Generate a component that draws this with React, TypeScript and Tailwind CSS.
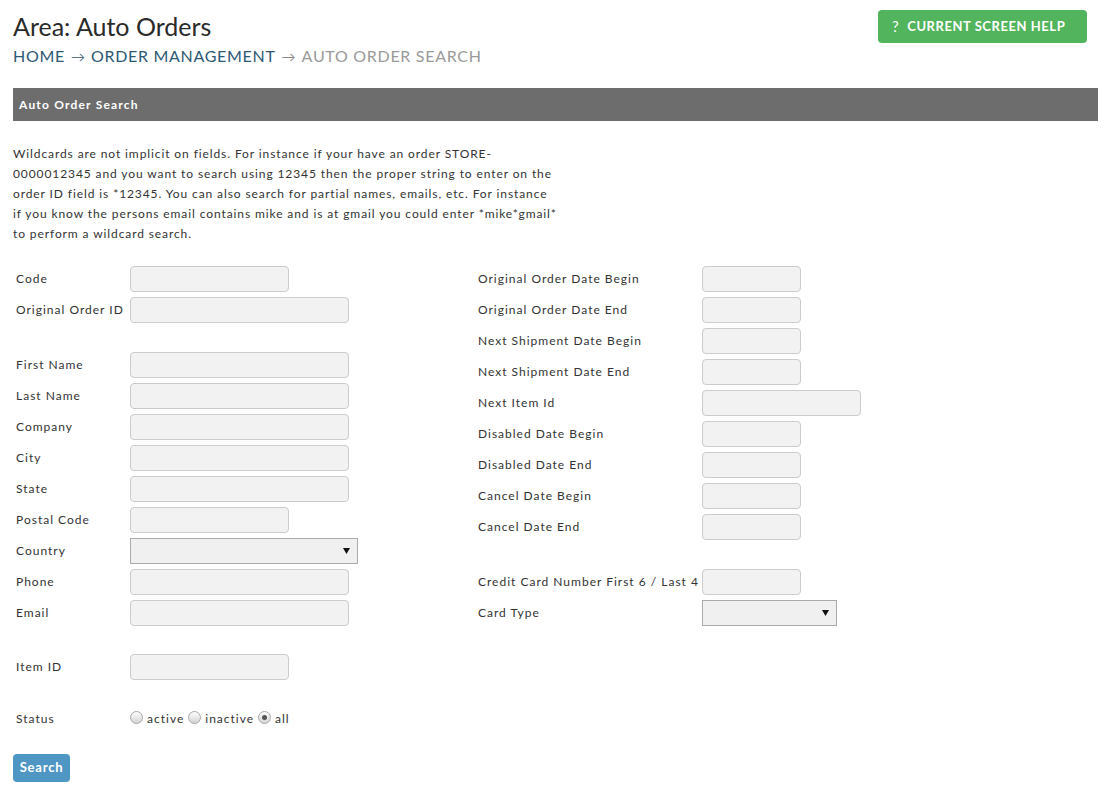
import React from "react";

const font = { fontFamily: "Lato, 'Open Sans', sans-serif" };

function Input({ w }: { w: string }) {
  return (
    <div className={`h-[26px] ${w} rounded-[4px] border border-[#cccccc] bg-[#f2f2f2]`} />
  );
}

function Select({ w }: { w: string }) {
  return (
    <div className={`h-[26px] ${w} border border-[#aaaaaa] bg-[#f0f0f0] flex items-center justify-end pr-[7px]`}>
      <svg width="7" height="6" viewBox="0 0 7 6">
        <path d="M0 0 H7 L3.5 6 Z" fill="#111" />
      </svg>
    </div>
  );
}

function Row({ label, children, lw }: { label: string; children: React.ReactNode; lw: string }) {
  return (
    <div className="flex items-center h-[26px]">
      <div className={`${lw} pl-[3px] shrink-0 text-[12px] tracking-[1px] text-[#333]`}>{label}</div>
      {children}
    </div>
  );
}

function Radio({ checked }: { checked?: boolean }) {
  return (
    <span className="inline-flex items-center justify-center w-[13px] h-[13px] rounded-full border border-[#a8a8a8] bg-gradient-to-b from-[#fdfdfd] to-[#d4d4d4] relative top-[-2px]">
      {checked && <span className="w-[5px] h-[5px] rounded-full bg-[#555]" />}
    </span>
  );
}

function Arrow({ c }: { c: string }) {
  return <span className={`${c} text-[14px] tracking-normal mx-[6px]`}>→</span>;
}

const paraLines = [
  "Wildcards are not implicit on fields. For instance if your have an order STORE-",
  "0000012345 and you want to search using 12345 then the proper string to enter on the",
  "order ID field is *12345. You can also search for partial names, emails, etc. For instance",
  "if you know the persons email contains mike and is at gmail you could enter *mike*gmail*",
  "to perform a wildcard search.",
];

export default function App() {
  const L = "w-[117px]";
  const R = "w-[227px]";
  return (
    <div style={font} className="bg-white w-[1107px] h-[800px] pl-[13px] pr-[9px] pt-[10px] text-[#333]">
      <div className="flex justify-between items-start">
        <div>
          <div className="text-[25px] leading-[32px] text-[#2a2a2a]">Area: Auto Orders</div>
          <div className="text-[16px] leading-[24px] tracking-[0.7px] mt-[2px] uppercase">
            <span className="text-[#2d5874]">Home</span>
            <Arrow c="text-[#5a7384]" />
            <span className="text-[#2d5874]">Order Management</span>
            <Arrow c="text-[#8a8a8a]" />
            <span className="text-[#9a9a9a]">Auto Order Search</span>
          </div>
        </div>
        <div className="mr-[11px] h-[33px] w-[209px] rounded-[4px] bg-[#52b45c] text-white flex items-center pl-[14px] text-[13px] font-bold tracking-[0.55px]">
          <span className="text-[15px] font-normal mr-[8px]">?</span>
          CURRENT SCREEN HELP
        </div>
      </div>

      <div className="mt-[19px] h-[33px] bg-[#6d6d6d] flex items-center pl-[6px] text-white text-[12px] font-bold tracking-[1.2px]">
        Auto Order Search
      </div>

      <div className="mt-[23px] text-[12px] leading-[20px] tracking-[0.9px] text-[#333]">
        {paraLines.map((l, i) => (
          <div key={i} className="whitespace-nowrap">{l}</div>
        ))}
      </div>

      <div className="mt-[22px] flex">
        <div className="w-[462px] flex flex-col gap-[5px]">
          <Row lw={L} label="Code"><Input w="w-[159px]" /></Row>
          <Row lw={L} label="Original Order ID"><Input w="w-[219px]" /></Row>
          <div className="h-[19px]" />
          <Row lw={L} label="First Name"><Input w="w-[219px]" /></Row>
          <Row lw={L} label="Last Name"><Input w="w-[219px]" /></Row>
          <Row lw={L} label="Company"><Input w="w-[219px]" /></Row>
          <Row lw={L} label="City"><Input w="w-[219px]" /></Row>
          <Row lw={L} label="State"><Input w="w-[219px]" /></Row>
          <Row lw={L} label="Postal Code"><Input w="w-[159px]" /></Row>
          <Row lw={L} label="Country"><Select w="w-[228px]" /></Row>
          <Row lw={L} label="Phone"><Input w="w-[219px]" /></Row>
          <Row lw={L} label="Email"><Input w="w-[219px]" /></Row>
          <div className="h-[18px]" />
          <Row lw={L} label="Item ID"><Input w="w-[159px]" /></Row>
          <div className="h-[16px]" />
          <Row lw={L} label="Status">
            <div className="flex items-center text-[12px] tracking-[1px] text-[#333] gap-[4px]">
              <Radio />
              <span>active</span>
              <Radio />
              <span>inactive</span>
              <Radio checked />
              <span>all</span>
            </div>
          </Row>
        </div>
        <div className="flex flex-col gap-[5px]">
          <Row lw={R} label="Original Order Date Begin"><Input w="w-[99px]" /></Row>
          <Row lw={R} label="Original Order Date End"><Input w="w-[99px]" /></Row>
          <Row lw={R} label="Next Shipment Date Begin"><Input w="w-[99px]" /></Row>
          <Row lw={R} label="Next Shipment Date End"><Input w="w-[99px]" /></Row>
          <Row lw={R} label="Next Item Id"><Input w="w-[159px]" /></Row>
          <Row lw={R} label="Disabled Date Begin"><Input w="w-[99px]" /></Row>
          <Row lw={R} label="Disabled Date End"><Input w="w-[99px]" /></Row>
          <Row lw={R} label="Cancel Date Begin"><Input w="w-[99px]" /></Row>
          <Row lw={R} label="Cancel Date End"><Input w="w-[99px]" /></Row>
          <div className="h-[19px]" />
          <Row lw={R} label="Credit Card Number First 6 / Last 4"><Input w="w-[99px]" /></Row>
          <Row lw={R} label="Card Type"><Select w="w-[135px]" /></Row>
        </div>
      </div>

      <div className="mt-[22px] w-[57px] h-[28px] rounded-[4px] bg-[#5096c5] text-white text-[13px] font-bold tracking-[0.8px] flex items-center justify-center">
        Search
      </div>
    </div>
  );
}
